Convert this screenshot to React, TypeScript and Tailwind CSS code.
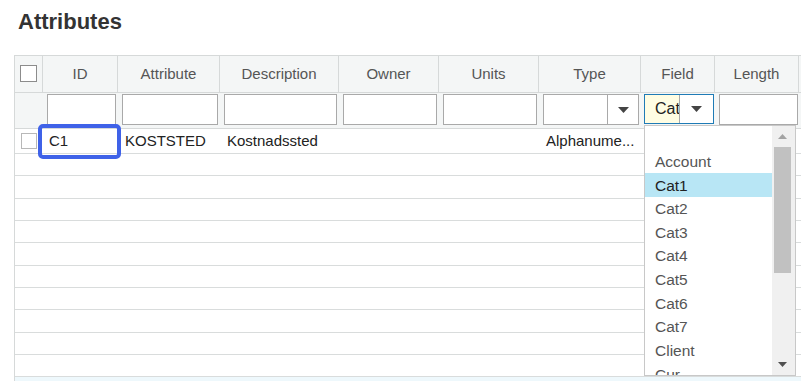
import React from "react";

const cols =
  "grid grid-cols-[28px_75px_102px_119px_100px_100px_102px_74px_84px_120px]";

const headers = ["ID", "Attribute", "Description", "Owner", "Units", "Type", "Field", "Length", ""];

const items = ["", "Account", "Cat1", "Cat2", "Cat3", "Cat4", "Cat5", "Cat6", "Cat7", "Client", "Cur"];

function Caret({ color = "#444" }: { color?: string }) {
  return (
    <svg width="11" height="6" viewBox="0 0 11 6">
      <path d="M0 0 L11 0 L5.5 6 Z" fill={color} />
    </svg>
  );
}

export default function App() {
  return (
    <div className="relative w-[801px] h-[381px] overflow-hidden bg-white font-['Liberation_Sans',Arial,sans-serif]">
      <h1 className="mt-[8px] pl-[18px] text-[22px] leading-[28px] font-bold text-[#333]">
        Attributes
      </h1>

      <div className="mt-[19px] ml-[14px] w-[900px] border-l border-t border-[#d6d9d9]">
        {/* header */}
        <div className={`${cols} h-[37px] bg-[#f4f6f6] border-b border-[#d6d9d9]`}>
          <div className="border-r border-[#d6d9d9] flex items-start pt-[9px] pl-[5px]">
            <div className="w-[17px] h-[17px] border border-[#8c8c8c] bg-white" />
          </div>
          {headers.map((h, i) => (
            <div
              key={i}
              className="border-r border-[#d6d9d9] flex items-center justify-center text-[15px] text-[#555]"
            >
              {h}
            </div>
          ))}
        </div>

        {/* filter row */}
        <div className={`${cols} h-[36px] bg-[#f4f6f6] border-b border-[#d6d9d9]`}>
          <div />
          {[0, 1, 2, 3, 4].map((i) => (
            <div key={i} className="pl-[4px] pr-[2px] pt-[1px]">
              <div className="h-[31px] border border-[#a9a9a9] bg-white" />
            </div>
          ))}
          <div className="pl-[4px] pr-[2px] pt-[1px]">
            <div className="h-[31px] border border-[#a9a9a9] bg-white flex">
              <div className="flex-1 border-r border-[#a9a9a9]" />
              <div className="w-[30px] flex items-center justify-center">
                <Caret />
              </div>
            </div>
          </div>
          <div className="pl-[3px] pr-[1px] pt-[1px]">
            <div className="h-[30px] border border-[#1f7bb6] bg-white flex">
              <div className="w-[35px] bg-[#fffde3] border-r border-[#a9a9a9] overflow-hidden whitespace-nowrap pl-[10px] flex items-center text-[16px] text-[#222]">
                Cat
              </div>
              <div className="flex-1 flex items-center justify-center">
                <Caret />
              </div>
            </div>
          </div>
          <div className="pl-[4px] pr-[1px] pt-[1px]">
            <div className="h-[31px] border border-[#a9a9a9] bg-white" />
          </div>
          <div />
        </div>

        {/* first data row */}
        <div className={`${cols} h-[25px] border-b border-[#d9dcdc] text-[15px] text-[#222]`}>
          <div className="flex items-start pt-[4px] pl-[6px]">
            <div className="w-[16px] h-[16px] border border-[#b8b8b8] bg-white" />
          </div>
          <div className="pl-[6px] flex items-center">C1</div>
          <div className="pl-[7px] flex items-center">KOSTSTED</div>
          <div className="pl-[7px] flex items-center">Kostnadssted</div>
          <div />
          <div />
          <div className="pl-[7px] flex items-center whitespace-nowrap">Alphanume...</div>
          <div />
          <div />
          <div />
        </div>

        {Array.from({ length: 10 }).map((_, i) => (
          <div key={i} className="h-[22.33px] border-b border-[#d9dcdc]" />
        ))}
        <div className="h-[20px] bg-[#eef8fc]" />
      </div>

      {/* focus editor box */}
      <div className="absolute left-[38px] top-[124px] w-[83px] h-[35px] border-4 border-[#3f62e8] rounded-[5px]" />

      {/* dropdown */}
      <div className="absolute left-[644px] top-[125px] w-[152px] h-[251px] border border-[#c8c8c8] bg-white flex overflow-hidden">
        <div className="w-[127px] overflow-hidden">
          {items.map((it, i) => (
            <div
              key={i}
              className={`h-[23.67px] pl-[10px] flex items-center text-[15.5px] whitespace-nowrap ${
                it === "Cat1" ? "bg-[#b8e6f5] text-[#222]" : "text-[#555]"
              }`}
            >
              {it}
            </div>
          ))}
        </div>
        <div className="w-[23px] bg-[#f0f0f0] flex flex-col items-start">
          <div className="h-[21px] w-full flex items-center justify-center pr-[2px]">
            <svg width="9" height="5" viewBox="0 0 9 5">
              <path d="M0 5 L9 5 L4.5 0 Z" fill="#a3a3a3" />
            </svg>
          </div>
          <div className="ml-[2px] w-[17px] h-[126px] bg-[#c1c1c1]" />
          <div className="flex-1" />
          <div className="h-[22px] w-full flex items-center justify-center pr-[2px]">
            <svg width="9" height="5" viewBox="0 0 9 5">
              <path d="M0 0 L9 0 L4.5 5 Z" fill="#505050" />
            </svg>
          </div>
        </div>
      </div>
    </div>
  );
}
